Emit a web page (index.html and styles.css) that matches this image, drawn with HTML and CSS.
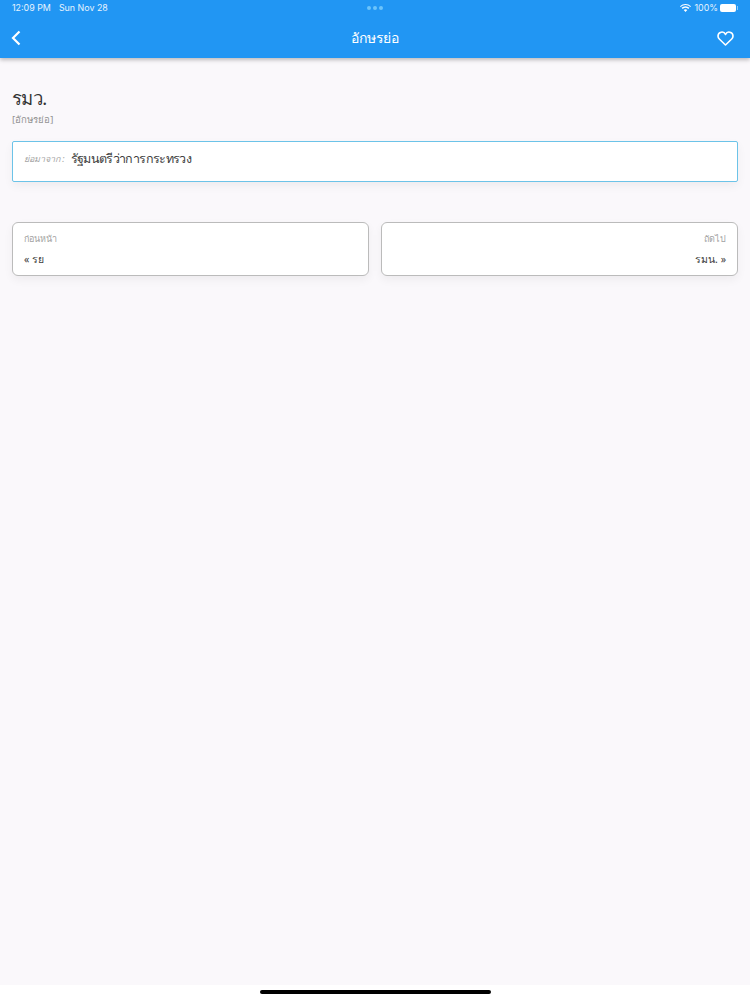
FILE: index.html
```html
<!DOCTYPE html>
<html lang="th">
<head>
<meta charset="utf-8">
<title>อักษรย่อ</title>
<link rel="stylesheet" href="styles.css">
</head>
<body>
<div class="app">
  <header class="header">
    <div class="status">
      <div class="status-left"><span>12:09 PM</span><span>Sun Nov 28</span></div>
      <div class="status-dots"><i></i><i></i><i></i></div>
      <div class="status-right">
        <svg class="wifi" width="11" height="8" viewBox="0 0 11 8"><path d="M5.500 8 3.700 6a2.600 2.600 0 0 1 3.600 0zM2.700 5 1.600 3.800a5.700 5.700 0 0 1 7.800 0L8.300 5a4.100 4.100 0 0 0-5.600 0zM.7 2.900 0 2.200a8 8 0 0 1 11 0l-.7.7a7 7 0 0 0-9.600 0z" fill="#fff"/></svg>
        <span>100%</span>
        <span class="battery"></span>
      </div>
    </div>
    <div class="nav">
      <div class="nav-side">
        <svg class="back-icon" width="10" height="16" viewBox="0 0 10 16"><path d="M8.500 1.500 2 8l6.500 6.500" fill="none" stroke="#fff" stroke-width="2.200"/></svg>
      </div>
      <div class="nav-title">อักษรย่อ</div>
      <div class="nav-side nav-side-end">
        <svg width="17" height="15" viewBox="0 0 17 15"><path d="M8.500 14 2.300 8A3.900 3.900 0 0 1 1 5a3.900 3.900 0 0 1 7.500-1.500A3.900 3.900 0 0 1 16 5a3.900 3.900 0 0 1-1.300 3z" fill="none" stroke="#fff" stroke-width="1.600" stroke-linejoin="round"/></svg>
      </div>
    </div>
  </header>
  <main class="content">
    <h1 class="term">รมว.</h1>
    <div class="kind">[อักษรย่อ]</div>
    <div class="meaning">
      <span class="meaning-label">ย่อมาจาก :</span>
      <span class="meaning-text">รัฐมนตรีว่าการกระทรวง</span>
    </div>
    <div class="pager">
      <div class="pager-card">
        <div class="pager-label">ก่อนหน้า</div>
        <div class="pager-value">« รย</div>
      </div>
      <div class="pager-card pager-next">
        <div class="pager-label">ถัดไป</div>
        <div class="pager-value">รมน. »</div>
      </div>
    </div>
  </main>
  <footer class="home"><div class="home-bar"></div></footer>
</div>
</body>
</html>
```
FILE: styles.css
```css
* { box-sizing: border-box; }
html, body { margin: 0; height: 100%; }
body { font-family: "Noto Sans", "Liberation Sans", "DejaVu Sans", sans-serif; background: #fff; overflow: hidden; }
.app { height: 1000px; display: flex; flex-direction: column; }

.header { height: 58px; background: #2196f3; color: #fff; box-shadow: 0 2px 4px rgba(0,0,0,.25); position: relative; flex: none; }
.status { height: 16px; padding: 0 12px; display: grid; grid-template-columns: 1fr auto 1fr; align-items: center; font-family: Inter, "Liberation Sans", sans-serif; font-size: 8.900px; line-height: 16px; color: #e6f3fe; }
.status-left { display: flex; gap: 8px; }
.status-dots { display: flex; gap: 2px; }
.status-dots i { width: 4px; height: 4px; border-radius: 50%; background: #6cc4fb; }
.status-right { display: flex; justify-content: flex-end; align-items: center; gap: 3px; }
.battery { width: 16px; height: 8px; background: #fff; border-radius: 2px; display: block; margin: 0 2px 0 -1px; position: relative; }
.battery::after { content: ""; position: absolute; left: 17px; top: 2px; width: 1px; height: 4px; background: #8ccafa; }

.nav { height: 42px; padding: 2px 16px 0; display: grid; grid-template-columns: 1fr auto 1fr; align-items: center; }
.nav-side { display: flex; }
.nav-side-end { justify-content: flex-end; }
.back-icon { margin-left: -5px; }
.nav-title { font-size: 14px; line-height: 20px; letter-spacing: -.25px; }

.content { flex: 1; background: #faf8fb; padding: 27px 12px 0; }
.term { margin: 0; font-weight: 400; font-size: 18.500px; line-height: 26px; letter-spacing: -.6px; color: #333; }
.kind { font-size: 9.600px; line-height: 14px; margin-top: 2px; color: #939393; }
.meaning { margin-top: 14px; height: 41px; display: flex; align-items: center; gap: 6px; padding: 0 11px 5px; background: #fff; border: 1px solid #6cc3e8; border-radius: 2px; box-shadow: 0 4px 10px rgba(0,0,0,.05); }
.meaning-label { font-size: 9px; font-style: italic; color: #a5a5a5; }
.meaning-text { font-size: 12.500px; letter-spacing: -.65px; color: #404040; }
.pager { margin-top: 40px; display: grid; grid-template-columns: 1fr 1fr; gap: 12px; }
.pager-card { height: 54px; padding: 8px 11px; background: #fff; border: 1px solid #bbb; border-radius: 6px; box-shadow: 0 4px 10px rgba(0,0,0,.05); }
.pager-next { text-align: right; }
.pager-label { font-size: 9px; line-height: 15px; color: #a2a2a2; }
.pager-value { font-size: 10.500px; line-height: 15px; margin-top: 6px; color: #404040; }

.home { height: 15px; flex: none; background: #fff; display: flex; justify-content: center; padding-top: 5px; }
.home-bar { width: 231px; height: 4px; border-radius: 2px; background: #000; }
```
